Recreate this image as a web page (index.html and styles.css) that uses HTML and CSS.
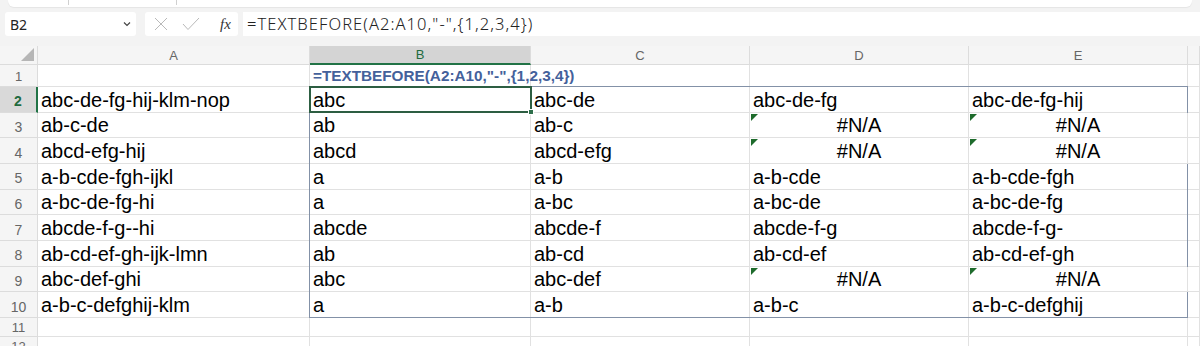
FILE: index.html
```html
<!DOCTYPE html>
<html lang="en">
<head>
    <meta charset="UTF-8">
    <title>TEXTBEFORE</title>
    <link rel="stylesheet" href="styles.css">
</head>
<body>
    <div class="ribbon-edge">
        <span class="sep sep-1"></span>
        <span class="sep sep-2"></span>
    </div>

    <div class="formula-bar">
        <div class="name-box">
            <span>B2</span>
            <svg width="8" height="6" viewBox="0 0 8 6"><path d="M1 1.5 L4 4.5 L7 1.5" fill="none" stroke="#444" stroke-width="1.2"/></svg>
        </div>
        <div class="fx-box">
            <svg class="icon-x" width="14" height="14" viewBox="0 0 14 14"><path d="M1 1 L13 13 M13 1 L1 13" stroke="#b9b9b9" stroke-width="1"/></svg>
            <svg class="icon-ok" width="18" height="14" viewBox="0 0 18 14"><path d="M1 7 L6 12.5 L17 1" fill="none" stroke="#b9b9b9" stroke-width="1"/></svg>
            <span class="fx">fx</span>
        </div>
        <div class="formula-input">=TEXTBEFORE(A2:A10,"-",{1,2,3,4})</div>
    </div>

    <div class="sheet-wrap">
        <div class="sheet">
            <!-- column headers -->
            <div class="corner"><span class="corner-mark"></span></div>
            <div class="col-head">A</div>
            <div class="col-head active">B</div>
            <div class="col-head">C</div>
            <div class="col-head">D</div>
            <div class="col-head">E</div>
            <div class="col-head"></div>

            <!-- row 1 -->
            <div class="row-head small">1</div>
            <div class="cell"></div>
            <div class="cell formula-text">=TEXTBEFORE(A2:A10,"-",{1,2,3,4})</div>
            <div class="cell"></div>
            <div class="cell"></div>
            <div class="cell"></div>
            <div class="cell"></div>

            <!-- row 2 -->
            <div class="row-head active">2</div>
            <div class="cell">abc-de-fg-hij-klm-nop</div>
            <div class="cell">abc</div>
            <div class="cell">abc-de</div>
            <div class="cell">abc-de-fg</div>
            <div class="cell">abc-de-fg-hij</div>
            <div class="cell"></div>

            <!-- row 3 -->
            <div class="row-head">3</div>
            <div class="cell">ab-c-de</div>
            <div class="cell">ab</div>
            <div class="cell">ab-c</div>
            <div class="cell error">#N/A</div>
            <div class="cell error">#N/A</div>
            <div class="cell"></div>

            <!-- row 4 -->
            <div class="row-head">4</div>
            <div class="cell">abcd-efg-hij</div>
            <div class="cell">abcd</div>
            <div class="cell">abcd-efg</div>
            <div class="cell error">#N/A</div>
            <div class="cell error">#N/A</div>
            <div class="cell"></div>

            <!-- row 5 -->
            <div class="row-head">5</div>
            <div class="cell">a-b-cde-fgh-ijkl</div>
            <div class="cell">a</div>
            <div class="cell">a-b</div>
            <div class="cell">a-b-cde</div>
            <div class="cell">a-b-cde-fgh</div>
            <div class="cell"></div>

            <!-- row 6 -->
            <div class="row-head">6</div>
            <div class="cell">a-bc-de-fg-hi</div>
            <div class="cell">a</div>
            <div class="cell">a-bc</div>
            <div class="cell">a-bc-de</div>
            <div class="cell">a-bc-de-fg</div>
            <div class="cell"></div>

            <!-- row 7 -->
            <div class="row-head">7</div>
            <div class="cell">abcde-f-g--hi</div>
            <div class="cell">abcde</div>
            <div class="cell">abcde-f</div>
            <div class="cell">abcde-f-g</div>
            <div class="cell">abcde-f-g-</div>
            <div class="cell"></div>

            <!-- row 8 -->
            <div class="row-head">8</div>
            <div class="cell">ab-cd-ef-gh-ijk-lmn</div>
            <div class="cell">ab</div>
            <div class="cell">ab-cd</div>
            <div class="cell">ab-cd-ef</div>
            <div class="cell">ab-cd-ef-gh</div>
            <div class="cell"></div>

            <!-- row 9 -->
            <div class="row-head">9</div>
            <div class="cell">abc-def-ghi</div>
            <div class="cell">abc</div>
            <div class="cell">abc-def</div>
            <div class="cell error">#N/A</div>
            <div class="cell error">#N/A</div>
            <div class="cell"></div>

            <!-- row 10 -->
            <div class="row-head">10</div>
            <div class="cell">a-b-c-defghij-klm</div>
            <div class="cell">a</div>
            <div class="cell">a-b</div>
            <div class="cell">a-b-c</div>
            <div class="cell">a-b-c-defghij</div>
            <div class="cell"></div>

            <!-- row 11 -->
            <div class="row-head small">11</div>
            <div class="cell"></div>
            <div class="cell"></div>
            <div class="cell"></div>
            <div class="cell"></div>
            <div class="cell"></div>
            <div class="cell"></div>

            <!-- row 12 -->
            <div class="row-head small">12</div>
            <div class="cell"></div>
            <div class="cell"></div>
            <div class="cell"></div>
            <div class="cell"></div>
            <div class="cell"></div>
            <div class="cell"></div>
        </div>

        <!-- spill range and active cell, same grid laid on top -->
        <div class="sheet sheet-overlay">
            <div class="spill-range"></div>
            <div class="active-cell"><span class="fill-handle"></span></div>
        </div>
    </div>
</body>
</html>
```

FILE: styles.css
```css
* {
    margin: 0;
    padding: 0;
    box-sizing: border-box;
}

body {
    font-family: 'Liberation Sans', Arial, sans-serif;
    background: #f3f3f3;
    color: #000;
    width: 1200px;
    height: 346px;
    overflow: hidden;
}

.ribbon-edge {
    position: relative;
    height: 7px;
    margin: 0 8px;
    background: #fff;
    border-radius: 0 0 6px 6px;
    box-shadow: 0 1px 1px rgba(0, 0, 0, 0.06);
}

.sep {
    position: absolute;
    top: 0;
    width: 1px;
    height: 5px;
    background: #d0d0d0;
}

.sep-1 { left: 60px; }
.sep-2 { left: 168px; }

.formula-bar {
    display: flex;
    align-items: center;
    height: 24px;
    margin-top: 5px;
    padding-left: 5px;
}

.name-box {
    display: flex;
    align-items: center;
    justify-content: space-between;
    width: 131px;
    height: 24px;
    padding: 0 5px 0 5px;
    background: #fff;
    border-radius: 3px;
    font-family: 'Noto Sans', 'Open Sans', sans-serif;
    font-size: 14px;
    color: #222;
}

.fx-box {
    display: flex;
    align-items: center;
    width: 93px;
    height: 24px;
    margin-left: 9px;
    padding-left: 9px;
    background: #fff;
    border-radius: 3px;
}

.icon-ok {
    margin-left: 14px;
}

.fx {
    margin-left: 20px;
    font-family: 'Liberation Serif', serif;
    font-style: italic;
    font-size: 15px;
    color: #333;
}

.formula-input {
    flex: 1;
    height: 24px;
    margin-left: 5px;
    padding-left: 4px;
    background: #fff;
    font-family: 'Noto Sans', 'Open Sans', sans-serif;
    font-size: 16.5px;
    font-weight: 300;
    letter-spacing: 1.05px;
    line-height: 24px;
    color: #222;
}

.sheet-wrap {
    display: grid;
    margin-top: 10px;
}

.sheet {
    grid-area: 1 / 1;
    display: grid;
    grid-template-columns: 38px 272px 221px 219px 219px 219px 1fr;
    grid-template-rows: 19px 22px repeat(9, 25.667px) 19px 19px;
    background: #fff;
}

.sheet-overlay {
    background: none;
    pointer-events: none;
}

.corner,
.col-head,
.row-head {
    background: #f5f5f5;
    color: #666;
    font-size: 13px;
    border-right: 1px solid #dcdcdc;
    border-bottom: 1px solid #dcdcdc;
    display: flex;
    align-items: center;
    justify-content: center;
}

.corner {
    position: relative;
}

.corner-mark {
    position: absolute;
    right: 3px;
    bottom: 3px;
    width: 0;
    height: 0;
    border-left: 13px solid transparent;
    border-bottom: 13px solid #b6b6b6;
}

.col-head.active {
    background: #d4d4d4;
    color: #1f6b3f;
    border-bottom: 2px solid #217346;
}

.row-head {
    font-size: 14px;
    padding-top: 4px;
}

.row-head.small {
    font-size: 13px;
    padding-top: 2px;
}

.row-head.active {
    background: #d9d9d9;
    color: #1f6b3f;
    font-weight: bold;
    border-right: 2px solid #217346;
}

.cell {
    display: flex;
    align-items: flex-end;
    padding: 0 3px 1px 3px;
    border-right: 1px solid #e1e1e1;
    border-bottom: 1px solid #e1e1e1;
    font-size: 20px;
    line-height: 21px;
    white-space: nowrap;
}

.cell.formula-text {
    padding-bottom: 2px;
    font-size: 15.3px;
    font-weight: bold;
    line-height: 17px;
    color: #44619b;
    letter-spacing: 0;
}

.cell.error {
    position: relative;
    justify-content: center;
}

.cell.error::before {
    content: '';
    position: absolute;
    top: 1px;
    left: 1px;
    width: 0;
    height: 0;
    border-top: 7px solid #1e6b2c;
    border-right: 7px solid transparent;
}

.spill-range {
    grid-column: 3 / 7;
    grid-row: 3 / 12;
    border: 1px solid #8391a7;
    margin: -1px 0 0 -1px;
}

.active-cell {
    position: relative;
    grid-column: 3;
    grid-row: 3;
    margin: -1px -1px 0 -1px;
    border: 2px solid #2d5e42;
}

.fill-handle {
    position: absolute;
    right: -4px;
    bottom: -4px;
    width: 6px;
    height: 6px;
    background: #2d6e4a;
    border: 1px solid #fff;
}
```
